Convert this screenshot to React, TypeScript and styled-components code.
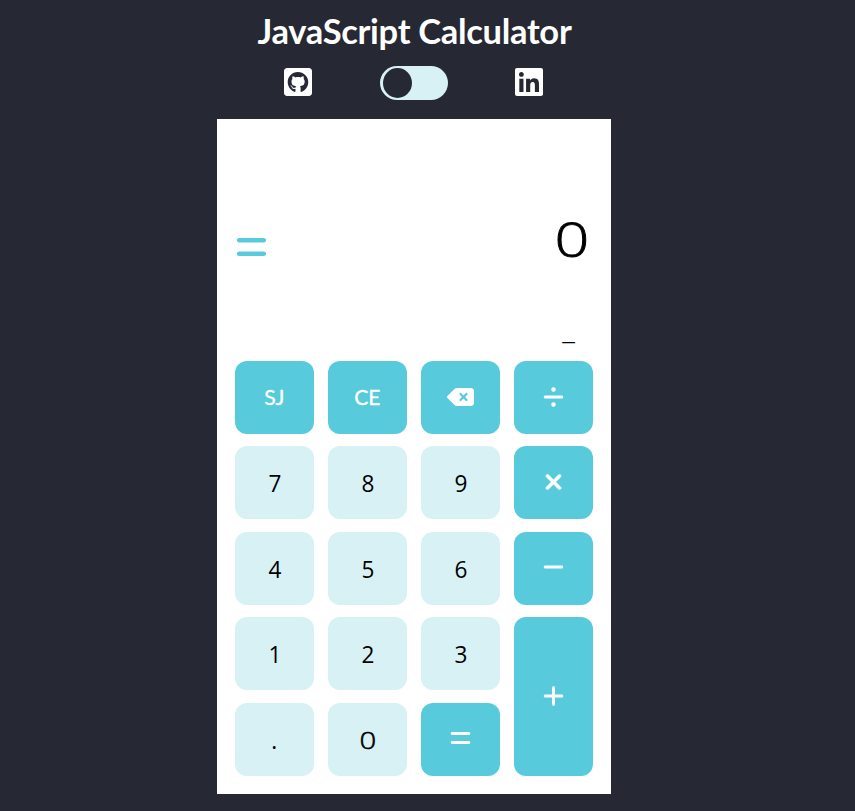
import React from "react";
import styled, { createGlobalStyle, css } from "styled-components";
import {
  FaDeleteLeft,
  FaDivide,
  FaEquals,
  FaMinus,
  FaPlus,
  FaXmark,
} from "react-icons/fa6";
import { FaGithubSquare, FaLinkedin } from "react-icons/fa";

const GlobalStyle = createGlobalStyle`
  *, *::before, *::after { box-sizing: border-box; }
  html { background: #262833; }
  body { margin: 0; background: #262833; overflow: hidden; }
`;

const Page = styled.main`
  display: flex;
  flex-direction: column;
  align-items: center;
  width: 394px;
  height: 811px;
  margin-left: 217px;
  color: #000;
  font-family: "Open Sans", "Noto Sans", sans-serif;
`;

const Title = styled.h1`
  height: 66px;
  margin: 0;
  padding: 9px 0 0 1px;
  color: #fff;
  font: 700 34.5px/44px Lato, sans-serif;
  letter-spacing: -0.3px;
  white-space: nowrap;
`;

const Links = styled.nav`
  display: flex;
  justify-content: space-between;
  width: 263px;
  height: 53px;
  margin-right: 1px;
`;

const IconLink = styled.a`
  display: flex;
  width: 32px;
  height: 32px;
  color: #fff;
  font-size: 32px;
`;

const Toggle = styled.button`
  display: flex;
  align-items: center;
  width: 68px;
  height: 34px;
  padding: 0 3px;
  border: 0;
  border-radius: 17px;
  background: #d8f1f5;
`;

const Knob = styled.span`
  width: 29px;
  height: 30px;
  border-radius: 50%;
  background: #262833;
`;

const Calculator = styled.section`
  width: 394px;
  height: 675px;
  padding: 0 18px 18px;
  background: #fff;
`;

const Display = styled.div`
  display: flex;
  flex-direction: column;
  height: 242px;
`;

const Result = styled.div`
  display: flex;
  align-items: center;
  justify-content: space-between;
  height: 76px;
  margin-top: 83px;
  padding-right: 4px;
`;

const EqualsMark = styled(FaEquals)`
  width: 33px;
  height: 36px;
  margin-top: 14px;
  color: #57cbdc;
`;

const Value = styled.output`
  margin-top: -3px;
  font: 300 48px/76px "Open Sans", "Noto Sans", sans-serif;
  -webkit-text-stroke: 0.8px #000;
  transform: scaleX(1.27);
  transform-origin: right;
`;

const Entry = styled.div`
  align-self: flex-end;
  height: 40px;
  margin-top: 29px;
  padding-right: 18px;
  font-size: 31px;
  font-weight: 300;
  line-height: 40px;
`;

const Keypad = styled.div`
  display: grid;
  grid-template-columns: repeat(4, 79px);
  grid-template-rows: repeat(5, 73px);
  gap: 12.45px 14px;
`;

const Key = styled.button<{ $accent?: boolean; $tall?: boolean }>`
  display: flex;
  align-items: center;
  justify-content: center;
  padding: 0;
  border: 0;
  border-radius: 12px;
  background: #d8f1f5;
  color: #000;
  font: 400 24px/32px "Open Sans", "Noto Sans", sans-serif;
  ${({ $tall }) => $tall && css`grid-row: span 2;`}
  ${({ $accent }) =>
    $accent &&
    css`
      background: #57cbdc;
      color: #fff;
    `}

  svg {
    width: 27px;
    height: 24px;
    margin-bottom: 2px;
  }
`;

const BoldXmark = styled(FaXmark)`
  stroke: currentColor;
  stroke-width: 16px;
`;

const KeyLabel = styled.span<{ $kind: "digit" | "zero" | "word" }>`
  padding-top: 1px;
  transform: scaleX(0.94);
  ${({ $kind }) =>
    $kind === "word" &&
    css`
      font: 400 21.5px/30px Lato, sans-serif;
      -webkit-text-stroke: 0.3px #fff;
      padding-top: 0;
      transform: translateY(-1px) scaleX(0.98);
    `}
  ${({ $kind }) =>
    $kind === "zero" &&
    css`
      font-weight: 300;
      -webkit-text-stroke: 0.55px #000;
      transform: scaleX(1.22);
    `}
`;

type KeySpec = {
  name: string;
  kind?: "digit" | "zero" | "word";
  icon?: React.ReactNode;
  accent?: boolean;
  tall?: boolean;
};

const keys: KeySpec[] = [
  { name: "SJ", kind: "word", accent: true },
  { name: "CE", kind: "word", accent: true },
  { name: "Delete", icon: <FaDeleteLeft />, accent: true },
  { name: "Divide", icon: <FaDivide />, accent: true },
  { name: "7" },
  { name: "8" },
  { name: "9" },
  { name: "Multiply", icon: <BoldXmark />, accent: true },
  { name: "4" },
  { name: "5" },
  { name: "6" },
  { name: "Subtract", icon: <FaMinus />, accent: true },
  { name: "1" },
  { name: "2" },
  { name: "3" },
  { name: "Add", icon: <FaPlus />, accent: true, tall: true },
  { name: "." },
  { name: "0", kind: "zero" },
  { name: "Equals", icon: <FaEquals />, accent: true },
];

export default function App() {
  return (
    <>
      <GlobalStyle />
      <Page>
        <Title>JavaScript Calculator</Title>
        <Links>
          <IconLink aria-label="GitHub"><FaGithubSquare /></IconLink>
          <Toggle aria-label="Toggle theme"><Knob /></Toggle>
          <IconLink aria-label="LinkedIn"><FaLinkedin /></IconLink>
        </Links>
        <Calculator>
          <Display>
            <Result>
              <EqualsMark />
              <Value>0</Value>
            </Result>
            <Entry>_</Entry>
          </Display>
          <Keypad>
            {keys.map(({ name, kind = "digit", icon, accent, tall }) => (
              <Key key={name} aria-label={name} $accent={accent} $tall={tall}>
                {icon ?? <KeyLabel $kind={kind}>{name}</KeyLabel>}
              </Key>
            ))}
          </Keypad>
        </Calculator>
      </Page>
    </>
  );
}
